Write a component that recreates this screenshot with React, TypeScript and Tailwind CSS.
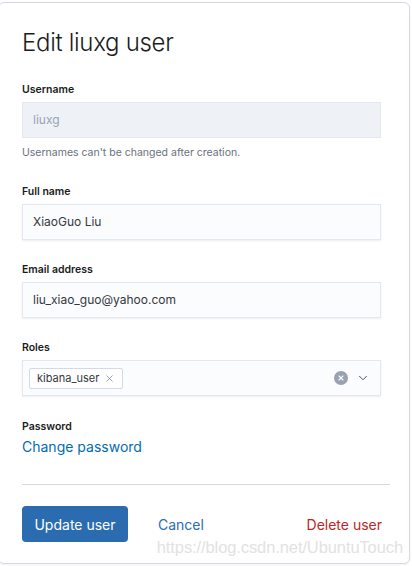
import { X, ChevronDown } from 'lucide-react'

function Label({ children }: { children: React.ReactNode }) {
  return <div className="mb-[5px] text-[10.5px] font-semibold leading-[14px] text-[#1a1c21]">{children}</div>
}

function Field({ value }: { value: string }) {
  return (
    <div className="flex h-[36px] w-[359px] items-center border border-[#e3e8f0] bg-[#fbfcfd] px-[10px] text-[12px] text-[#343741] shadow-[0_1px_2px_rgba(0,0,0,0.07)]">
      {value}
    </div>
  )
}

export default function App() {
  return (
    <div className="h-[566px] w-[412px] overflow-hidden bg-white font-['Inter',sans-serif]">
      <div className="relative ml-[-2px] mt-[2px] h-[562px] w-[412px] rounded-[6px] border border-[#d3dae6] bg-white pl-[23px] shadow-[0_1px_3px_rgba(0,0,0,0.06)]">
        <h1 className="pt-[25px] text-[24px] font-light leading-[30px] tracking-[-0.3px] text-[#1a1c21]">
          Edit liuxg user
        </h1>

        {/* Username */}
        <div className="mt-[25px]">
          <Label>Username</Label>
          <div className="flex h-[36px] w-[359px] items-center border border-[#e3e8f0] bg-[#eef2f7] px-[10px] text-[12px] text-[#98a2b3]">
            liuxg
          </div>
          <div className="mt-[8px] text-[10.5px] leading-[14px] text-[#69707d]">
            Usernames can&apos;t be changed after creation.
          </div>
        </div>

        {/* Full name */}
        <div className="mt-[25px]">
          <Label>Full name</Label>
          <Field value="XiaoGuo Liu" />
        </div>

        {/* Email */}
        <div className="mt-[23px]">
          <Label>Email address</Label>
          <Field value="liu_xiao_guo@yahoo.com" />
        </div>

        {/* Roles */}
        <div className="mt-[23px]">
          <Label>Roles</Label>
          <div className="flex h-[36px] w-[359px] items-center border border-[#e3e8f0] bg-[#fbfcfd] pl-[6px] pr-[10px] shadow-[0_1px_2px_rgba(0,0,0,0.07)]">
            <span className="flex h-[21px] items-center gap-[5px] rounded-[2px] border border-[#d3dae6] bg-white px-[7px] text-[11px] text-[#343741]">
              kibana_user
              <X size={11} strokeWidth={1.4} className="text-[#69707d]" />
            </span>
            <div className="ml-auto flex items-center gap-[8px]">
              <span className="flex h-[14px] w-[14px] items-center justify-center rounded-full bg-[#98a2b3]">
                <X size={8} strokeWidth={3.2} className="text-white" />
              </span>
              <ChevronDown size={14} strokeWidth={1.5} className="text-[#343741]" />
            </div>
          </div>
        </div>

        {/* Password */}
        <div className="mt-[24px]">
          <div className="text-[10.5px] font-semibold leading-[14px] text-[#1a1c21]">Password</div>
          <div className="mt-[4px] text-[14px] leading-[18px] text-[#006bb4]">Change password</div>
        </div>

        <div className="mt-[28px] h-px w-[368px] bg-[#d3dae6]" />

        {/* Actions */}
        <div className="mt-[21px] flex w-[360px] items-center">
          <button className="h-[36px] w-[106px] rounded-[4px] bg-[#2b6cb0] text-[14px] text-white">
            Update user
          </button>
          <span className="ml-[30px] text-[14px] text-[#2b6cb0]">Cancel</span>
          <span className="ml-auto text-[14px] text-[#bd271e]">Delete user</span>
        </div>

        <div className="absolute bottom-[6px] right-[6px] font-['Liberation_Sans',sans-serif] text-[16.5px] leading-[20px] tracking-[-0.1px] text-[#e2e2e2]">
          https://blog.csdn.net/UbuntuTouch
        </div>
      </div>
    </div>
  )
}
